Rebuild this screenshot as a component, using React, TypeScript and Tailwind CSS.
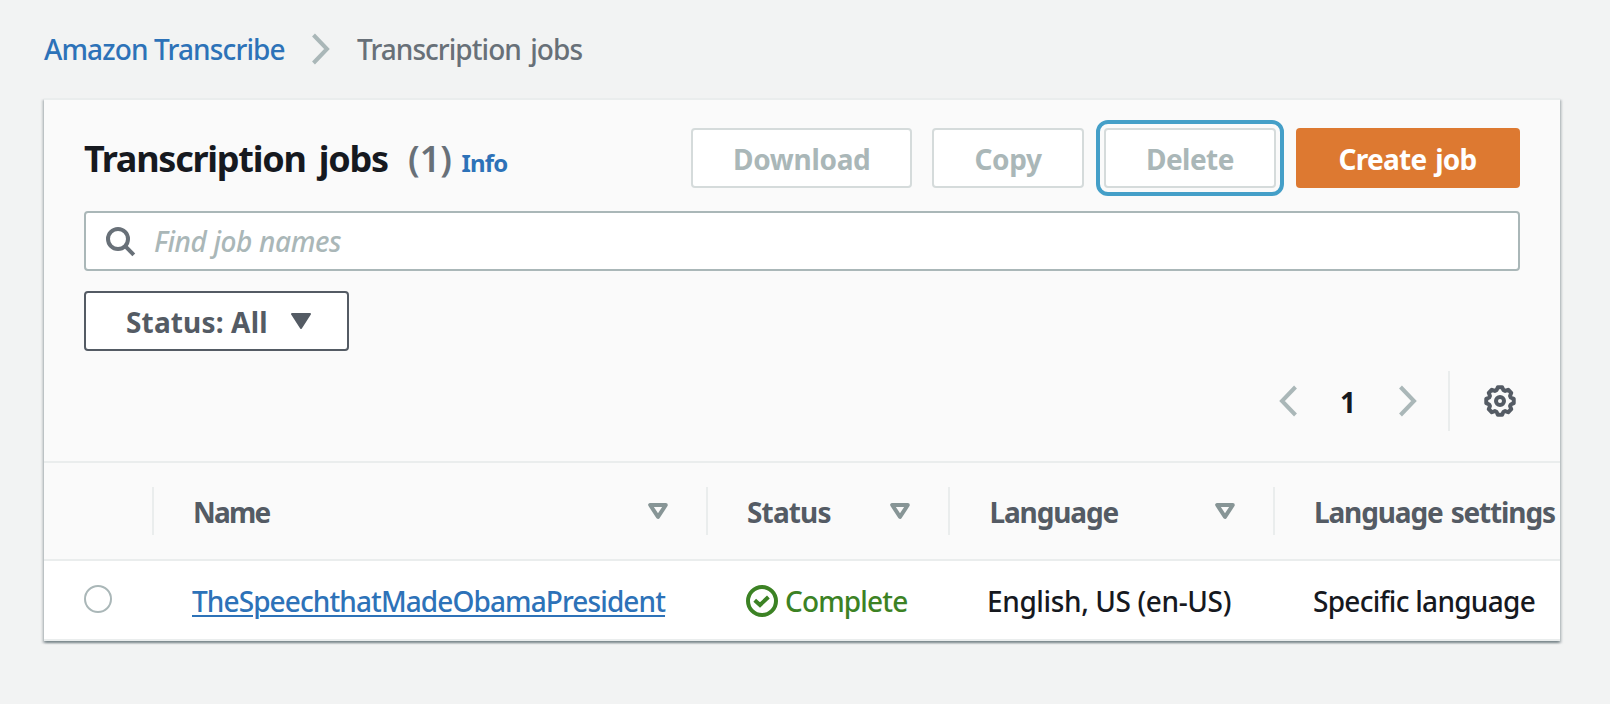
import type { ReactNode } from 'react';

const gearPath = (() => {
  const pts: string[] = [];
  for (let k = 0; k < 8; k++) {
    for (const [offset, r] of [[-18, 11.3], [-9, 13.9], [9, 13.9], [18, 11.3]]) {
      const a = ((k * 45 - 90 + offset) * Math.PI) / 180;
      pts.push(`${(16 + r * Math.cos(a)).toFixed(2)} ${(16 + r * Math.sin(a)).toFixed(2)}`);
    }
  }
  return `M${pts.join('L')}Z`;
})();

function Chevron({ left = false }: { left?: boolean }) {
  return (
    <svg width="18" height="32" viewBox="0 0 18 32" fill="none" stroke="#aab7b8" strokeWidth="4" className="shrink-0">
      <path d={left ? 'M16.5 2 3 16 16.5 30' : 'M1.5 2 15 16 1.5 30'} />
    </svg>
  );
}

function SortIcon() {
  return (
    <svg width="20" height="16" viewBox="0 0 20 16" fill="none" stroke="#879596" strokeWidth="4" strokeLinejoin="round" className="shrink-0">
      <path d="M2.2 2H17.8L10 13.9Z" />
    </svg>
  );
}

function DisabledButton({ className, children }: { className: string; children: ReactNode }) {
  return (
    <button className={`flex h-[60px] shrink-0 items-center rounded-[4px] border-2 border-[#d5dbdb] bg-white pt-px text-left font-bold text-[#aab7b8] ${className}`}>
      {children}
    </button>
  );
}

function HeaderCell({ className, sortable = true, children }: { className: string; sortable?: boolean; children: ReactNode }) {
  return (
    <div className={`flex h-12 shrink-0 items-center justify-between border-l-2 border-[#eaeded] pr-[38px] font-bold whitespace-nowrap text-[#545b64] ${className}`}>
      <span className="pt-[2px]">{children}</span>
      {sortable && <SortIcon />}
    </div>
  );
}

export default function App() {
  return (
    <div className="h-[704px] w-[1610px] overflow-hidden bg-[#f2f3f3] font-['Noto_Sans',sans-serif] text-[28px] leading-[40px] text-[#16191f]">
      <nav className="flex h-[98px] items-center pl-[44px] font-medium whitespace-nowrap">
        <a className="w-[268px] tracking-[-0.87px] text-[#2d72b8]">Amazon Transcribe</a>
        <Chevron />
        <span className="ml-[27px] tracking-[-0.95px] text-[#687078] [word-spacing:3px]">Transcription jobs</span>
      </nav>

      <section className="ml-[44px] h-[543px] w-[1516px] bg-white shadow-[0_2px_2px_0_rgba(0,28,36,0.3),2px_2px_2px_0_rgba(0,28,36,0.15),-2px_2px_2px_0_rgba(0,28,36,0.15)]">
        <div className="h-full overflow-hidden">
          <div className="h-[365px] border-y-2 border-[#eaeded] bg-[#fafafa] px-10 pt-[28px]">
            <div className="flex h-[60px] items-center">
              <div className="flex w-[607px] shrink-0 items-baseline pt-[2px] whitespace-nowrap">
                <h1 className="w-[324px] text-[36px] leading-[48px] font-bold tracking-[-1.25px] [word-spacing:5px]">Transcription jobs</h1>
                <span className="w-[53.5px] text-[36px] font-semibold text-[#687078]">(1)</span>
                <a className="text-[24px] font-bold tracking-[-0.8px] text-[#2d72b8]">Info</a>
              </div>
              <DisabledButton className="w-[221px] pl-[40px] tracking-[-0.3px]">Download</DisabledButton>
              <DisabledButton className="ml-5 w-[152px] pl-[40.5px] tracking-[-0.4px]">Copy</DisabledButton>
              <DisabledButton className="ml-5 w-[172px] pl-[40px] tracking-[-0.55px] outline-4 outline-offset-4 outline-[#449fc8]">Delete</DisabledButton>
              <button className="ml-5 flex h-[60px] w-[224px] shrink-0 items-center rounded-[4px] bg-[#dd7931] pt-px pl-[42.5px] text-left font-bold tracking-[-0.7px] whitespace-nowrap text-white [word-spacing:2px]">
                Create job
              </button>
            </div>

            <div className="mt-[23px] flex h-[60px] items-center rounded-[4px] border-2 border-[#aab7b8] bg-white pl-5">
              <svg width="30" height="30" viewBox="0 0 30 30" fill="none" stroke="#687078" strokeWidth="4" className="mt-px shrink-0">
                <circle cx="12" cy="12" r="10" />
                <path d="M18.7 18.7 27.8 27.8" />
              </svg>
              <span className="ml-[18px] font-medium tracking-[-0.4px] text-[#aab7b8] italic">Find job names</span>
            </div>

            <button className="mt-5 flex h-[60px] w-[265px] items-center rounded-[4px] border-2 border-[#545b64] bg-white pl-[40px] text-left font-bold tracking-[0.15px] whitespace-nowrap text-[#545b64]">
              <span className="w-[165px] pt-px">Status: All</span>
              <svg width="20" height="16" viewBox="0 0 20 16" fill="#545b64" stroke="#545b64" strokeWidth="2" strokeLinejoin="round">
                <path d="M1 1H19L10 15Z" />
              </svg>
            </button>

            <div className="mt-5 flex h-[60px] items-center justify-end">
              <Chevron left />
              <span className="w-[102px] pt-px text-center font-bold">1</span>
              <Chevron />
              <div className="ml-[31px] flex h-[60px] items-center border-l-2 border-[#eaeded] pr-1 pl-[34px]">
                <svg width="32" height="32" viewBox="0 0 32 32" fill="none" stroke="#545b64" strokeWidth="4" strokeLinejoin="round">
                  <path d={gearPath} />
                  <circle cx="16" cy="16" r="4" />
                </svg>
              </div>
            </div>
          </div>

          <div className="flex h-[98px] items-center border-b-2 border-[#eaeded] bg-[#fafafa] pl-[108px]">
            <HeaderCell className="w-[554px] pl-[39px] tracking-[-1.8px]">Name</HeaderCell>
            <HeaderCell className="w-[242px] pl-[39px] tracking-[-0.85px]">Status</HeaderCell>
            <HeaderCell className="w-[325px] pl-[39.5px] tracking-[-1.15px]">Language</HeaderCell>
            <HeaderCell className="w-[330px] pl-[39px] tracking-[-1.15px] [word-spacing:2px]" sortable={false}>Language settings</HeaderCell>
          </div>

          <div className="flex h-[80px] items-center border-b-2 border-[#eaeded] pt-[2px] pl-10 font-medium whitespace-nowrap">
            <span className="mb-1 size-7 shrink-0 rounded-full border-2 border-[#aab7b8] bg-white" />
            <div className="ml-20 w-[554px] shrink-0">
              <a className="inline-block tracking-[-0.9px] text-[#2d72b8] underline decoration-2 underline-offset-[3px]">TheSpeechthatMadeObamaPresident</a>
            </div>
            <div className="flex w-[241px] shrink-0 items-center text-[#3c8224]">
              <svg width="32" height="32" viewBox="0 0 32 32" fill="none" stroke="currentColor" strokeWidth="4" className="shrink-0">
                <circle cx="16" cy="16" r="14" />
                <path d="M8.7 15.2 14 20 22.4 12" />
              </svg>
              <span className="ml-[7px] tracking-[-0.85px]">Complete</span>
            </div>
            <span className="w-[326px] shrink-0 tracking-[-0.38px]">English, US (en-US)</span>
            <span className="tracking-[-0.72px]">Specific language</span>
          </div>
        </div>
      </section>
    </div>
  );
}
